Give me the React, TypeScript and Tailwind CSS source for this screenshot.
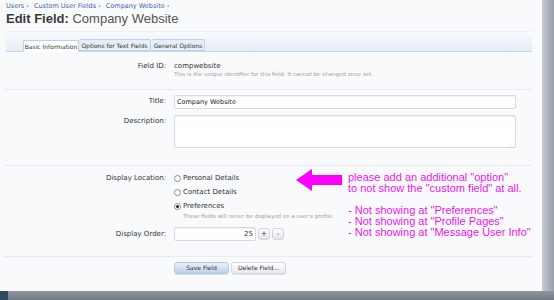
import React from 'react';

const ui = { fontFamily: '"DejaVu Sans", "Liberation Sans", sans-serif' };
const arial = { fontFamily: '"Liberation Sans", Arial, sans-serif' };

const Row = ({ label, children, className = '', lh = 'leading-[13px]' }: { label: string; children: React.ReactNode; className?: string; lh?: string }) => (
  <div className={`grid grid-cols-[160px_1fr] gap-x-[8px] ${className}`}>
    <div className={`text-right text-[7px] ${lh} text-[#333]`}>{label}</div>
    <div>{children}</div>
  </div>
);

const Radio = ({ label, checked = false }: { label: string; checked?: boolean }) => (
  <label className="flex items-center gap-[2px] h-[14px] text-[7px] text-[#333]">
    <span className="w-[7px] h-[7px] rounded-full border border-[#8a8a8a] bg-white flex items-center justify-center">
      {checked && <span className="w-[3px] h-[3px] rounded-full bg-[#222]" />}
    </span>
    {label}
  </label>
);

const Divider = () => <div className="h-px bg-[#e8ecf2] ml-[-2px] w-[528px]" />;

export default function App() {
  return (
    <div className="w-[554px] h-[300px] flex flex-col overflow-hidden" style={ui}>
      <div className="flex h-[291px]">
        <div className="relative w-[542px] bg-[#f9fafc] px-[6px] pt-[1px]">
          {/* breadcrumb */}
          <div className="text-[6.5px] leading-[10px] text-[#3a62a4] flex gap-[5px]">
            <span>Users ›</span>
            <span>Custom User Fields ›</span>
            <span>Company Website ›</span>
          </div>
          <h1 className="text-[13px] leading-[16px] text-[#555]" style={arial}>
            <span className="font-bold text-[#3a3a3a]">Edit Field:</span> Company Website
          </h1>

          {/* tabs */}
          <div className="mt-[4px] h-[21px] w-[526px] border-t border-[#eef2f7] bg-gradient-to-b from-[#f8fafd] to-[#e4edf7] border-b border-b-[#c4d6ea] flex items-end pl-[17px]">
            <div className="h-[12px] w-[56px] bg-white border border-[#bcd0e6] border-b-white mb-[-1px] rounded-t-[2px] text-[6px] leading-[11px] text-center text-[#333]">
              Basic Information
            </div>
            <div className="h-[12px] w-[72px] bg-[#e6eef8] border border-[#bcd0e6] border-l-0 rounded-t-[2px] text-[6px] leading-[11px] text-center text-[#333]">
              Options for Text Fields
            </div>
            <div className="h-[12px] w-[53px] bg-[#e6eef8] border border-[#bcd0e6] border-l-0 ml-[1px] rounded-t-[2px] text-[6px] leading-[11px] text-center text-[#333]">
              General Options
            </div>
          </div>

          {/* field id */}
          <Row label="Field ID:" className="mt-[8px]">
            <div className="text-[7px] leading-[13px] text-[#333]">compwebsite</div>
            <div className="text-[5.5px] leading-[6px] text-[#a3a3a3] mt-[-2px]">
              This is the unique identifier for this field. It cannot be changed once set.
            </div>
          </Row>
          <div className="mt-[12px]"><Divider /></div>

          <Row label="Title:" className="mt-[5px]">
            <div className="w-[342px] h-[14px] bg-white border border-[#d6d9de] rounded-[2px] shadow-[inset_0_1px_1px_rgba(0,0,0,0.06)] text-[6.5px] leading-[12px] px-[2px] text-[#222]">
              Company Website
            </div>
          </Row>
          <Row label="Description:" className="mt-[6px]">
            <div className="relative w-[342px] h-[33px] bg-white border border-[#d6d9de] rounded-[2px] shadow-[inset_0_1px_1px_rgba(0,0,0,0.06)]">
              <span className="absolute right-[1px] bottom-[0px] text-[5px] leading-[5px] text-[#aaa]">⋰</span>
            </div>
          </Row>
          <div className="mt-[17px]"><Divider /></div>

          <Row label="Display Location:" className="mt-[5px]" lh="leading-[14px]">
            <Radio label="Personal Details" />
            <Radio label="Contact Details" />
            <Radio label="Preferences" checked />
            <div className="text-[5.5px] leading-[6px] text-[#a3a3a3] ml-[9px]">
              These fields will never be displayed on a user's profile.
            </div>
          </Row>
          <Row label="Display Order:" className="mt-[8px]" lh="leading-[14px]">
            <div className="flex items-center gap-[2px]">
              <div className="w-[82px] h-[14px] bg-white border border-[#d6d9de] rounded-[2px] shadow-[inset_0_1px_1px_rgba(0,0,0,0.06)] text-[7px] leading-[12px] text-right pr-[2px] text-[#333]">
                25
              </div>
              <div className="w-[12px] h-[12px] rounded-[3px] border border-[#d0d4da] bg-gradient-to-b from-white to-[#e2e6ec] text-[7px] leading-[10px] text-center text-[#333]">+</div>
              <div className="w-[12px] h-[12px] rounded-[3px] border border-[#d0d4da] bg-gradient-to-b from-white to-[#e2e6ec] text-[7px] leading-[10px] text-center text-[#333]">-</div>
            </div>
          </Row>
          <div className="mt-[15px]"><Divider /></div>

          <div className="mt-[5px] ml-[168px] flex gap-[2px]">
            <div className="w-[55px] h-[12px] rounded-[3px] border border-[#b5c9de] bg-gradient-to-b from-[#e9f1f9] to-[#bcd2e8] text-[6px] leading-[10px] text-center text-[#333] shadow-[0_1px_1px_rgba(0,0,0,0.1)]">
              Save Field
            </div>
            <div className="w-[55px] h-[12px] rounded-[3px] border border-[#d2d6dc] bg-gradient-to-b from-white to-[#e6e9ee] text-[6px] leading-[10px] text-center text-[#333] shadow-[0_1px_1px_rgba(0,0,0,0.1)]">
              Delete Field...
            </div>
          </div>

          {/* annotation overlay */}
          <svg className="absolute left-[296px] top-[168px]" width="48" height="24" viewBox="0 0 48 24">
            <polygon points="0,12 16,1 16,7 46,7 46,17 16,17 16,23" fill="#ff00ff" />
          </svg>
          <div className="absolute left-[348px] top-[172px] text-[11px] leading-[11px] text-[#f014f0] whitespace-pre" style={arial}>
            {'please add an additional "option"\nto not show the "custom field" at all.\n\n- Not showing at "Preferences"\n- Not showing at "Profile Pages"\n- Not showing at "Message User Info"'}
          </div>
        </div>
        <div className="w-[12px] bg-gradient-to-r from-[#c9ccd3] via-[#aeb3bd] to-[#9aa0ab]" />
      </div>
      <div className="h-[9px] flex">
        <div className="w-[8px] bg-[#2f4a5e]" />
        <div className="flex-1 bg-gradient-to-b from-[#8f979f] to-[#6f7a84]" />
      </div>
    </div>
  );
}
